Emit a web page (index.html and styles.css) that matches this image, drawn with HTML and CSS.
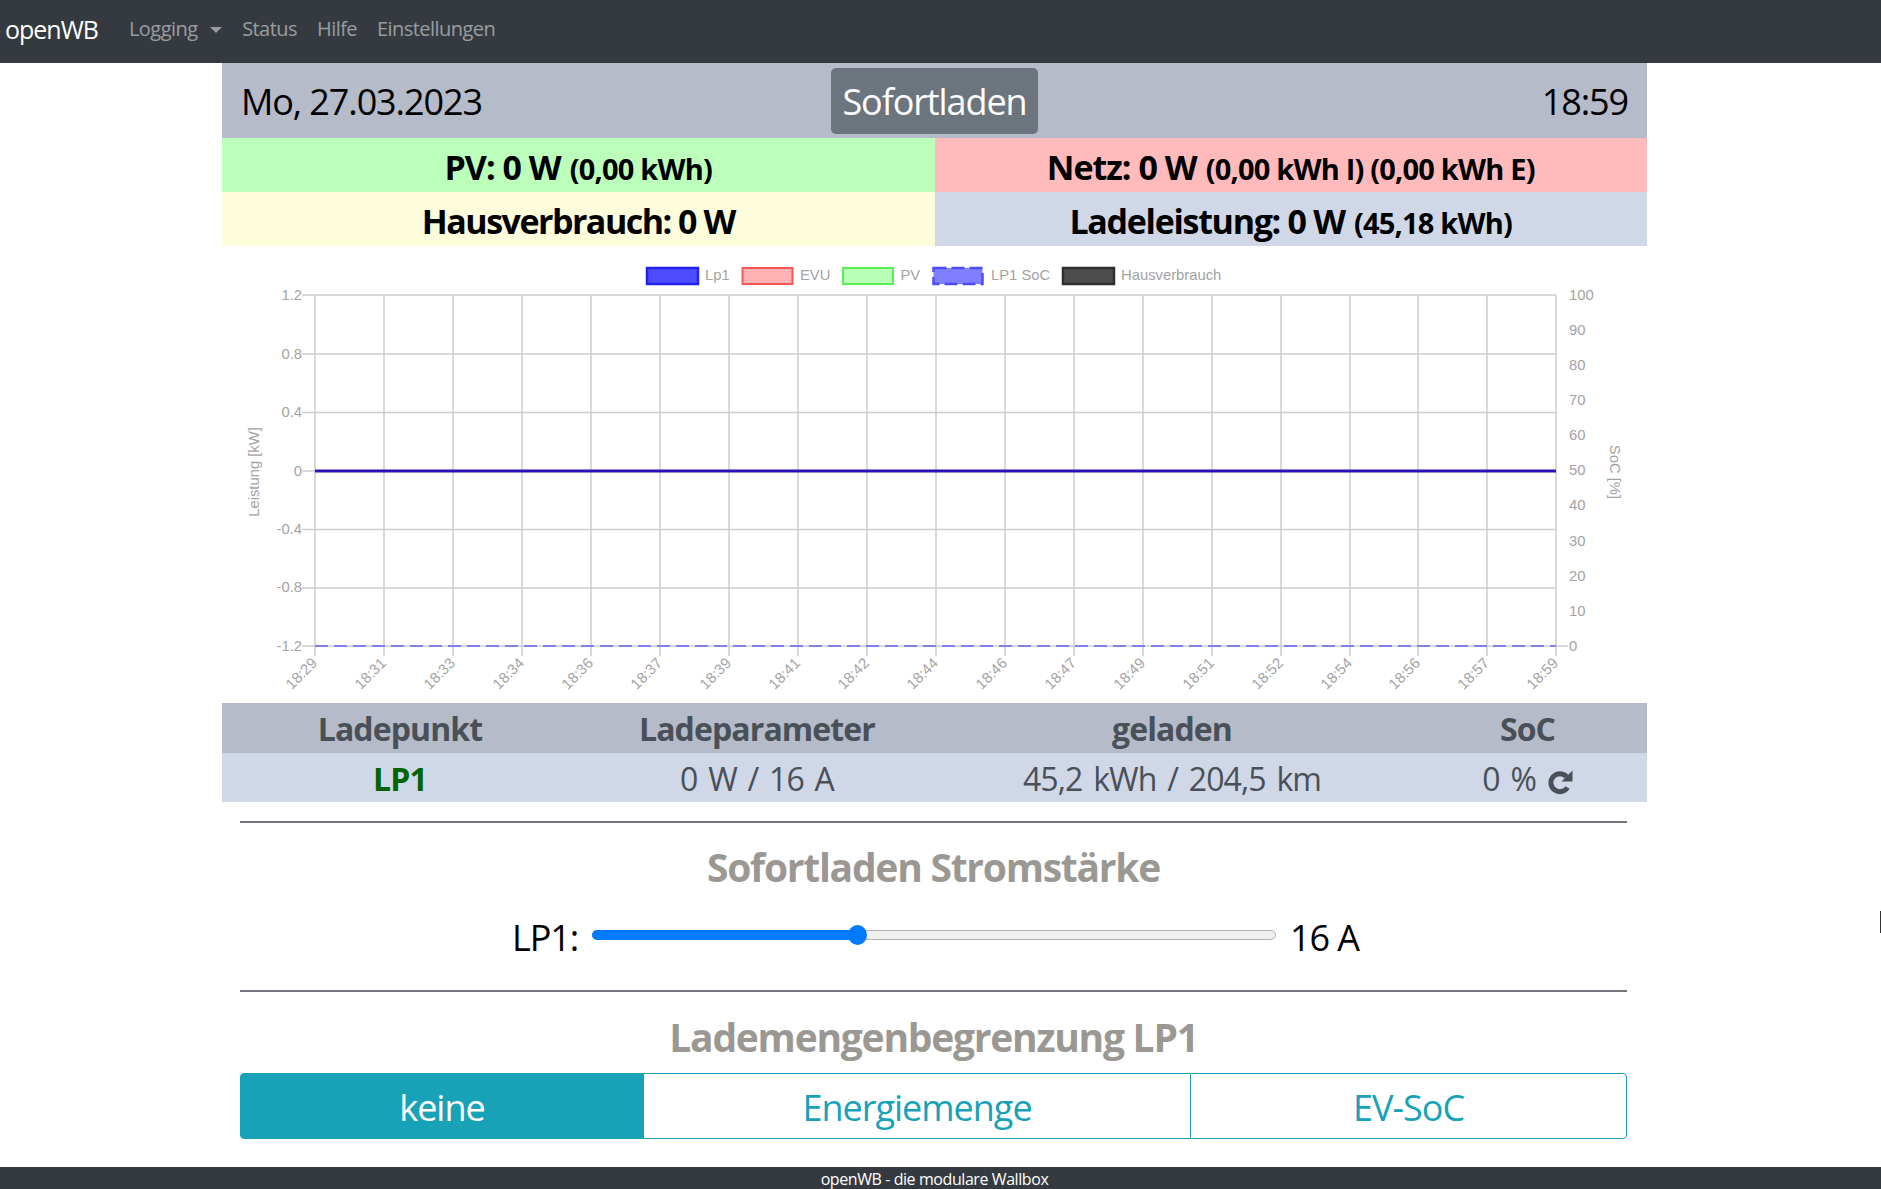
FILE: index.html
```html
<!DOCTYPE html>
<html lang="de">
<head>
<meta charset="utf-8">
<title>openWB</title>
<link rel="stylesheet" href="styles.css">
</head>
<body>
<nav class="navbar">
  <a class="brand">openWB</a>
  <a class="nav-link">Logging <span class="caret"></span></a>
  <a class="nav-link">Status</a>
  <a class="nav-link">Hilfe</a>
  <a class="nav-link">Einstellungen</a>
</nav>
<div class="page">
<main class="container">
  <div class="top-row">
    <div class="top-date">Mo, 27.03.2023</div>
    <div class="mode-btn">Sofortladen</div>
    <div class="top-time">18:59</div>
  </div>
  <div class="stats">
    <div class="stat pv">PV: 0 W <small>(0,00 kWh)</small></div>
    <div class="stat netz">Netz: 0 W <small>(0,00 kWh I) (0,00 kWh E)</small></div>
    <div class="stat haus">Hausverbrauch: 0 W</div>
    <div class="stat lade">Ladeleistung: 0 W <small>(45,18 kWh)</small></div>
  </div>
  <div class="chart">
    <svg class="chart-svg" width="1425" height="457" viewBox="222 246 1425 457">
      <g class="legend-boxes">
        <rect x="647" y="268" width="51" height="16" fill="#4d4dff" stroke="#2222ee" stroke-width="2.500"/>
        <rect x="742.500" y="268" width="50" height="16" fill="#ffb3b3" stroke="#ff5555" stroke-width="2"/>
        <rect x="843" y="268" width="50" height="16" fill="#b8ffb8" stroke="#55f055" stroke-width="2"/>
        <rect x="933.500" y="268" width="49" height="16" fill="#8080ff" stroke="#4d4dff" stroke-width="2.500" stroke-dasharray="13 5"/>
        <rect x="1063" y="268" width="51" height="16" fill="#4d4d4d" stroke="#2e2e2e" stroke-width="2.500"/>
      </g>
      <g class="legend-text">
        <text x="705" y="280">Lp1</text>
        <text x="800" y="280">EVU</text>
        <text x="900.500" y="280">PV</text>
        <text x="991" y="280">LP1 SoC</text>
        <text x="1121" y="280">Hausverbrauch</text>
      </g>
      <g class="grid">
        <path d="M302 295H1556M302 354H1556M302 412.500H1556M302 471H1556M302 529.500H1556M302 588H1556M302 646H1568"/>
        <path d="M315 295V656M384 295V656M453 295V656M522 295V656M591 295V656M660 295V656M729 295V656M798 295V656M867 295V656M936 295V656M1005 295V656M1074 295V656M1143 295V656M1212 295V656M1281 295V656M1350 295V656M1418 295V656M1487 295V656M1556 295V656"/>
      </g>
      <path class="line-lp" d="M315 471H1556"/>
      <path class="line-soc" d="M315 646H1556"/>
      <g class="axis-left">
        <text x="302" y="300">1.2</text>
        <text x="302" y="359">0.8</text>
        <text x="302" y="417">0.4</text>
        <text x="302" y="476">0</text>
        <text x="302" y="534">-0.4</text>
        <text x="302" y="592">-0.8</text>
        <text x="302" y="651">-1.2</text>
      </g>
      <g class="axis-right">
        <text x="1569" y="300">100</text>
        <text x="1569" y="335">90</text>
        <text x="1569" y="370">80</text>
        <text x="1569" y="405">70</text>
        <text x="1569" y="440">60</text>
        <text x="1569" y="475">50</text>
        <text x="1569" y="510">40</text>
        <text x="1569" y="546">30</text>
        <text x="1569" y="581">20</text>
        <text x="1569" y="616">10</text>
        <text x="1569" y="651">0</text>
      </g>
      <text class="axis-title" transform="translate(259 472) rotate(-90)">Leistung [kW]</text>
      <text class="axis-title" transform="translate(1610 472) rotate(90)">SoC [%]</text>
      <g class="axis-x">
        <text transform="translate(318 664) rotate(-45)">18:29</text>
        <text transform="translate(387 664) rotate(-45)">18:31</text>
        <text transform="translate(456 664) rotate(-45)">18:33</text>
        <text transform="translate(525 664) rotate(-45)">18:34</text>
        <text transform="translate(594 664) rotate(-45)">18:36</text>
        <text transform="translate(663 664) rotate(-45)">18:37</text>
        <text transform="translate(732 664) rotate(-45)">18:39</text>
        <text transform="translate(801 664) rotate(-45)">18:41</text>
        <text transform="translate(870 664) rotate(-45)">18:42</text>
        <text transform="translate(939 664) rotate(-45)">18:44</text>
        <text transform="translate(1008 664) rotate(-45)">18:46</text>
        <text transform="translate(1077 664) rotate(-45)">18:47</text>
        <text transform="translate(1146 664) rotate(-45)">18:49</text>
        <text transform="translate(1215 664) rotate(-45)">18:51</text>
        <text transform="translate(1284 664) rotate(-45)">18:52</text>
        <text transform="translate(1353 664) rotate(-45)">18:54</text>
        <text transform="translate(1421 664) rotate(-45)">18:56</text>
        <text transform="translate(1490 664) rotate(-45)">18:57</text>
        <text transform="translate(1559 664) rotate(-45)">18:59</text>
      </g>
    </svg>
  </div>
  <div class="lp-table">
    <div class="lp-row lp-head">
      <div>Ladepunkt</div>
      <div>Ladeparameter</div>
      <div>geladen</div>
      <div>SoC</div>
    </div>
    <div class="lp-row lp-body">
      <div class="lp-name">LP1</div>
      <div>0 W / 16 A</div>
      <div>45,2 kWh / 204,5 km</div>
      <div>0 % <svg class="refresh" viewBox="0 0 26 26" width="26" height="26"><path d="M19.500 7.500A9 9 0 1 0 20.500 18.500" fill="none" stroke="#495057" stroke-width="5"/><path d="M25.500 1.500V12.500H14.500Z" fill="#495057"/></svg></div>
    </div>
  </div>
  <div class="controls">
    <hr class="rule">
    <h2 class="section-title title-first">Sofortladen Stromstärke</h2>
    <div class="slider-row">
      <span class="slider-label">LP1:</span>
      <div class="slider"><div class="slider-fill"></div><div class="slider-thumb"></div></div>
      <span class="slider-value">16 A</span>
    </div>
    <hr class="rule">
    <h2 class="section-title title-second">Lademengenbegrenzung LP1</h2>
    <div class="btn-group">
      <div class="seg seg-active">keine</div>
      <div class="seg seg-mid">Energiemenge</div>
      <div class="seg seg-last">EV-SoC</div>
    </div>
  </div>
</main>
</div>
<div class="cursor-mark"></div>
<footer class="footer">openWB - die modulare Wallbox</footer>
</body>
</html>
```
FILE: styles.css
```css
* { box-sizing: border-box; }
html, body { margin: 0; padding: 0; }
body {
  height: 1189px;
  overflow: hidden;
  background: #fff;
  color: #000;
  font-family: "Open Sans", "Noto Sans", sans-serif;
  display: flex;
  flex-direction: column;
  position: relative;
}
.navbar {
  height: 63px;
  flex: none;
  background: #343a40;
  display: flex;
  align-items: center;
  padding: 0 0 6px 5px;
  font-size: 20px;
}
.brand { color: #fff; font-size: 25px; letter-spacing: -1px; margin-right: 31px; }
.nav-link { color: rgba(255,255,255,.5); margin-right: 20px; letter-spacing: -.55px; }
.caret {
  display: inline-block;
  border-top: 6px solid rgba(255,255,255,.5);
  border-left: 6px solid transparent;
  border-right: 6px solid transparent;
  vertical-align: 3px;
  margin-left: 8px;
}
.page { flex: 1; display: flex; justify-content: center; padding-right: 12px; }
.container { width: 1425px; flex: none; }
.top-row {
  height: 75px;
  background: #b5bbc9;
  display: grid;
  grid-template-columns: 1fr auto 1fr;
  align-items: center;
  padding: 0 19px;
  font-size: 36px;
  letter-spacing: -1.100px;
}
.top-date, .top-time { padding-top: 2px; }
.top-time { text-align: right; }
.mode-btn {
  width: 207px;
  height: 66px;
  background: #6c757d;
  color: #fff;
  border-radius: 5px;
  display: flex;
  align-items: center;
  justify-content: center;
  padding-top: 2px;
}
.stats { display: grid; grid-template-columns: 1fr 1fr; grid-auto-rows: 54px; }
.stat {
  display: flex;
  align-items: center;
  justify-content: center;
  gap: .27em;
  padding-top: 3px;
  font-size: 34px;
  font-weight: 700;
  letter-spacing: -1px;
}
.stat small { font-size: 29px; letter-spacing: -.8px; padding-top: 3px; }
.pv { background: #bbffbb; }
.netz { background: #ffbbbb; }
.haus { background: #fdfddb; letter-spacing: -1.500px; }
.lade { background: #d0d7e7; letter-spacing: -1.300px; }
.chart { height: 457px; }
.chart-svg { display: block; }
.chart-svg text { font-family: "Liberation Sans", Arial, sans-serif; font-size: 14.800px; fill: #a3a3a3; }
.grid path { stroke: #cdcdcd; stroke-width: 1.500; fill: none; }
.line-lp { stroke: #2a10b8; stroke-width: 3; fill: none; }
.line-soc { stroke: #8080ee; stroke-width: 2; stroke-dasharray: 13 6; fill: none; }
.axis-left text { text-anchor: end; }
.axis-title { text-anchor: middle; }
.axis-x text { text-anchor: end; }
.lp-table { font-size: 32px; color: #495057; }
.lp-row {
  display: grid;
  grid-template-columns: 356px 358px 472px 239px;
  align-items: center;
  text-align: center;
  letter-spacing: -.9px;
}
.lp-head { height: 50px; background: #b5bbc9; font-weight: 700; }
.lp-body { height: 49px; background: #d0d7e7; word-spacing: 3.300px; padding-top: 1px; }
.lp-name { color: #006400; font-weight: 700; }
.refresh { vertical-align: -4px; }
.controls { padding: 0 20px 0 18px; }
.rule { border: 0; border-top: 2px solid #6f757b; margin: 0; }
.rule:first-child { margin-top: 19px; }
.section-title {
  margin: 0;
  color: #9b9893;
  text-align: center;
  font-size: 39px;
  font-weight: 700;
  letter-spacing: -1.250px;
  line-height: 46px;
}
.title-first { padding-top: 21px; }
.title-second { padding-top: 22px; }
.slider-row {
  display: flex;
  align-items: center;
  justify-content: center;
  height: 90px;
  padding-left: 4px;
  font-size: 36px;
  letter-spacing: -1.100px;
  margin-bottom: 10px;
}
.slider-label, .slider-value { padding-top: 4px; }
.slider {
  position: relative;
  width: 684px;
  height: 10px;
  margin: 0 14px;
  background: #efefef;
  border: 1px solid #b2b2b2;
  border-radius: 5px;
}
.slider-fill {
  position: absolute;
  left: -1px; top: -1px; bottom: -1px;
  width: 266px;
  background: #007bff;
  border-radius: 5px;
}
.slider-thumb {
  position: absolute;
  left: 255px; top: -6px;
  width: 19px; height: 20px;
  background: #007bff;
  border-radius: 50%;
}
.btn-group {
  display: grid;
  grid-template-columns: 404px 546px 437px;
  height: 66px;
  margin-top: 13px;
  font-size: 36px;
  letter-spacing: -1px;
  color: #17a2b8;
}
.seg {
  display: flex;
  align-items: center;
  justify-content: center;
  border: 1px solid #17a2b8;
  padding-top: 2px;
}
.seg-active { background: #17a2b8; color: #fff; border-radius: 4px 0 0 4px; }
.seg-mid { border-left: 0; border-right: 0; }
.seg-last { border-radius: 0 4px 4px 0; }
.cursor-mark { position: absolute; left: 1880px; top: 911px; width: 1px; height: 22px; background: #333; }
.footer {
  height: 22px;
  flex: none;
  padding-right: 12px;
  background: #343a40;
  color: #fff;
  text-align: center;
  font-size: 16px;
  line-height: 24px;
  letter-spacing: -.42px;
}
```
